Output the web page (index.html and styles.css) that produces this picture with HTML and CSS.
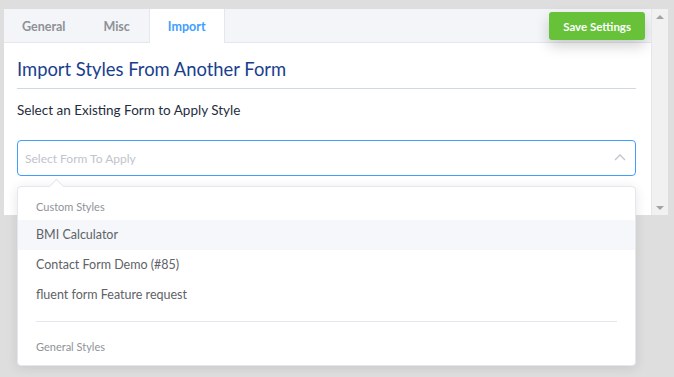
FILE: index.html
```html
<!DOCTYPE html>
<html lang="en">
<head>
    <meta charset="UTF-8">
    <title>Import Styles</title>
    <link rel="stylesheet" href="styles.css">
</head>
<body>
    <div class="frame">
        <div class="panel">
            <div class="tabs">
                <div class="tab">General</div>
                <div class="tab">Misc</div>
                <div class="tab active">Import</div>
                <button class="save-btn">Save Settings</button>
            </div>

            <div class="panel-body">
                <h3 class="title">Import Styles From Another Form</h3>
                <p class="label">Select an Existing Form to Apply Style</p>

                <div class="select-wrap">
                    <div class="select">
                        <span class="placeholder">Select Form To Apply</span>
                        <svg class="chevron" width="12" height="8" viewBox="0 0 12 8">
                            <path d="M1 7 L6 2 L11 7" fill="none" stroke="#c0c4cc" stroke-width="1.3"/>
                        </svg>
                    </div>

                    <!-- ドロップダウン -->
                    <div class="dropdown">
                        <span class="pointer"></span>
                        <div class="group">
                            <div class="group-title">Custom Styles</div>
                            <div class="option hover">BMI Calculator</div>
                            <div class="option">Contact Form Demo (#85)</div>
                            <div class="option">fluent form Feature request</div>
                        </div>
                        <div class="group last">
                            <div class="group-title">General Styles</div>
                        </div>
                    </div>
                </div>
            </div>
        </div>

        <div class="scrollbar">
            <span class="arrow up"></span>
            <span class="arrow down"></span>
        </div>
    </div>
</body>
</html>
```

FILE: styles.css
```css
html, body {
    height: 100%;
}

body {
    margin: 0;
    background-color: #dedede;
    font-family: 'Lato', 'Noto Sans', sans-serif;
}

.frame {
    display: flex;
    width: 664px;
    height: 206px;
    margin: 9px 0 0 4px;
}

.panel {
    flex: 1;
    background-color: #fff;
}

/* タブ */
.tabs {
    display: flex;
    align-items: stretch;
    height: 33px;
    background-color: #f4f5f9;
    border-bottom: 1px solid #e4e7ed;
}

.tab {
    display: flex;
    align-items: center;
    padding: 1px 19px 0;
    font-size: 12.5px;
    font-weight: bold;
    color: #8e9196;
    margin-bottom: -1px;
}

.tab:first-child {
    padding-left: 18px;
}

.tab.active {
    color: #409eff;
    background-color: #fff;
    border-left: 1px solid #e4e7ed;
    border-right: 1px solid #e4e7ed;
    padding: 1px 18px 0;
}

.save-btn {
    margin: 3px 6px 0 auto;
    height: 28px;
    padding: 0 14px;
    background: #67c23a;
    color: #fff;
    border: none;
    border-radius: 3px;
    font-family: 'Lato', sans-serif;
    font-size: 11.5px;
    font-weight: bold;
    box-shadow: 0 6px 14px rgba(0, 0, 0, 0.18);
}

.panel-body {
    padding: 14px 15px 0 13px;
}

.title {
    margin: 0;
    font-size: 18.4px;
    font-weight: normal;
    line-height: 24px;
    color: #1a3e8e;
    padding-bottom: 7px;
    border-bottom: 1px solid #cfd8e3;
}

.label {
    margin: 11px 0 0;
    font-size: 13.5px;
    line-height: 20px;
    color: #1f2d3d;
}

/* セレクト */
.select-wrap {
    position: relative;
    margin-top: 20px;
}

.select {
    display: flex;
    align-items: center;
    justify-content: space-between;
    height: 34px;
    padding: 0 9px 0 7px;
    border: 1px solid #409eff;
    border-radius: 4px;
}

.placeholder {
    font-size: 12px;
    color: #c0c4cc;
}

.chevron {
    margin-top: -2px;
}

.dropdown {
    position: absolute;
    top: 46px;
    left: 0;
    right: 0;
    background: #fff;
    border: 1px solid #e4e7ed;
    border-radius: 4px;
    box-shadow: 0 2px 12px rgba(0, 0, 0, 0.1);
    padding: 5px 0 5px;
    z-index: 10;
}

.pointer {
    position: absolute;
    top: -6px;
    left: 33px;
    width: 10px;
    height: 10px;
    background: #fff;
    border-left: 1px solid #e4e7ed;
    border-top: 1px solid #e4e7ed;
    transform: rotate(45deg);
}

.group {
    position: relative;
    padding-bottom: 22px;
}

.group::after {
    content: "";
    position: absolute;
    left: 18px;
    right: 18px;
    bottom: 10px;
    height: 1px;
    background: #e4e7ed;
}

.group.last {
    padding-bottom: 0;
}

.group.last::after {
    display: none;
}

.group-title {
    padding: 2px 0 0 18px;
    font-size: 11px;
    line-height: 26px;
    color: #909399;
}

.option {
    padding-left: 18px;
    font-size: 12.5px;
    line-height: 30px;
    color: #606266;
}

.option.hover {
    background-color: #f5f7fa;
}

/* スクロールバー */
.scrollbar {
    position: relative;
    width: 16px;
    background-color: #f1f1f1;
    border-left: 1px solid #e6e6e6;
}

.arrow {
    position: absolute;
    left: 4px;
    width: 0;
    height: 0;
    border-left: 4px solid transparent;
    border-right: 4px solid transparent;
}

.arrow.up {
    top: 6px;
    border-bottom: 4px solid #a3a3a3;
}

.arrow.down {
    bottom: 5px;
    border-top: 4px solid #a3a3a3;
}
```
